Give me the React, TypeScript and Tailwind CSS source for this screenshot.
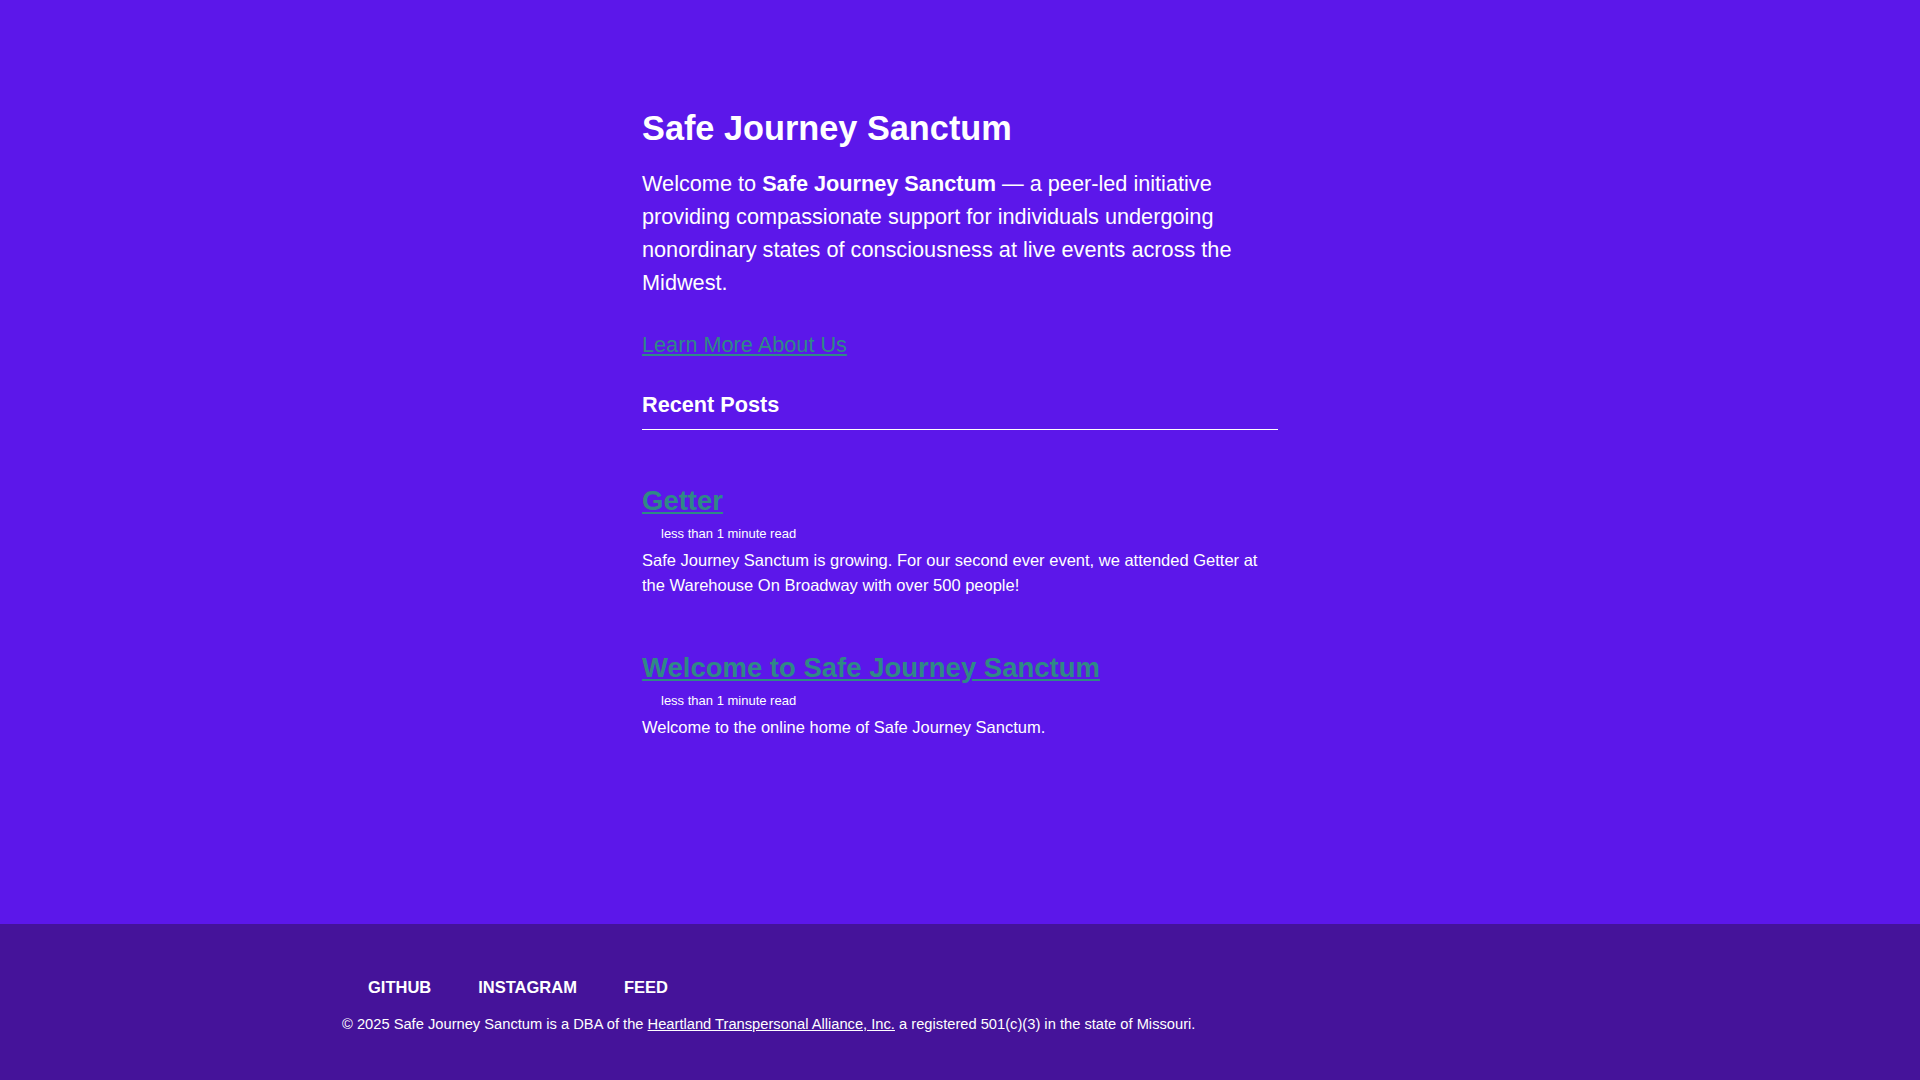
const posts = [
  {
    title: "Getter",
    meta: "less than 1 minute read",
    excerpt:
      "Safe Journey Sanctum is growing. For our second ever event, we attended Getter at the Warehouse On Broadway with over 500 people!",
  },
  {
    title: "Welcome to Safe Journey Sanctum",
    meta: "less than 1 minute read",
    excerpt: "Welcome to the online home of Safe Journey Sanctum.",
  },
];

const App = () => {
  return (
    <div className="min-h-screen flex flex-col bg-[#5c17ea] text-white font-['Liberation_Sans',Arial,sans-serif]">
      <main className="flex-1">
        <div className="mx-auto w-[636px] pt-[108px]">
          <h1 className="text-[34.3px] leading-[40px] font-bold">Safe Journey Sanctum</h1>
          <p className="mt-[19px] text-[21.7px] leading-[33px]">
            Welcome to <strong className="font-bold">Safe Journey Sanctum</strong> — a peer-led initiative
            providing compassionate support for individuals undergoing nonordinary states of consciousness at
            live events across the Midwest.
          </p>
          <p className="mt-[29px] text-[21.7px] leading-[33px]">
            <a href="#" className="text-[#2f8986] underline">
              Learn More About Us
            </a>
          </p>
          <h3 className="mt-[30px] text-[21.7px] leading-[28px] font-bold pb-[10px] border-b border-white">
            Recent Posts
          </h3>

          <div className="flex flex-col">
            {posts.map((post, i) => (
              <article key={post.title} className={i === 0 ? "mt-[54px]" : "mt-[53px]"}>
                <h2 className="text-[27.5px] leading-[34px] font-bold">
                  <a href="#" className="text-[#2f8986] underline">
                    {post.title}
                  </a>
                </h2>
                <p className="mt-[7px] pl-[19px] text-[13px] leading-[18px]">{post.meta}</p>
                <p className="mt-[5px] text-[16.5px] leading-[25px]">{post.excerpt}</p>
              </article>
            ))}
          </div>
        </div>
      </main>

      <footer className="h-[156px] bg-[#45139a]">
        <div className="mx-auto w-[1236px] pt-[53px]">
          <ul className="flex items-center gap-[47px] pl-[26px] text-[16.5px] leading-[20px] font-bold uppercase">
            <li>
              <a href="#">GitHub</a>
            </li>
            <li>
              <a href="#">Instagram</a>
            </li>
            <li>
              <a href="#">Feed</a>
            </li>
          </ul>
          <p className="mt-[17px] text-[14.7px] leading-[20px]">
            © 2025 Safe Journey Sanctum is a DBA of the{" "}
            <a href="#" className="underline">
              Heartland Transpersonal Alliance, Inc.
            </a>{" "}
            a registered 501(c)(3) in the state of Missouri.
          </p>
        </div>
      </footer>
    </div>
  );
};

export default App;
